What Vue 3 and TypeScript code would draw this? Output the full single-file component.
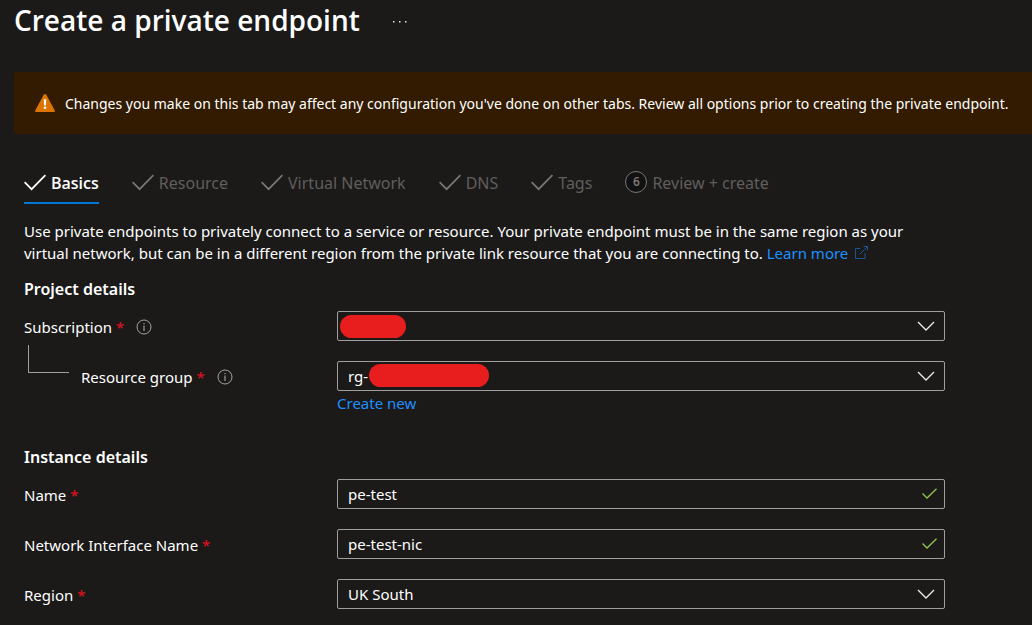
<script setup lang="ts">
import { ref } from 'vue'

interface Tab {
  label: string
  step?: number
}

const tabs: Tab[] = [
  { label: 'Basics' },
  { label: 'Resource' },
  { label: 'Virtual Network' },
  { label: 'DNS' },
  { label: 'Tags' },
  { label: 'Review + create', step: 6 },
]

const activeTab = ref('Basics')
const name = ref('pe-test')
const nicName = ref('pe-test-nic')
const region = ref('UK South')
const resourceGroup = ref('rg-')
</script>

<template>
  <main class="page">
    <header class="header">
      <h1>Create a private endpoint</h1>
      <button class="more" type="button" aria-label="More actions">
        <svg width="14" height="6" viewBox="0 0 14 6" aria-hidden="true">
          <path d="M0 4h1.500v1.500H0zM6 4h1.500v1.500H6zM12 4h1.500v1.500H12z" fill="#e8e6e3" />
        </svg>
      </button>
    </header>

    <div class="banner" role="status">
      <svg width="20" height="18" viewBox="0 0 20 18" aria-hidden="true">
        <path d="M8.700.8a1.500 1.500 0 0 1 2.600 0l8.500 15.600a1.100 1.100 0 0 1-1 1.600H1.200a1.100 1.100 0 0 1-1-1.600z" fill="#db7500" />
        <path d="M8.700 5.200h2.600l-.4 6.300H9.100z" fill="#fff" />
        <circle cx="10" cy="13.700" r="1.300" fill="#fff" />
      </svg>
      <span class="message">Changes you make on this tab may affect any configuration you've done on other tabs. Review all options prior to creating the private endpoint.</span>
    </div>

    <div class="content">
      <nav class="tabs" aria-label="Steps">
        <button
          v-for="tab in tabs"
          :key="tab.label"
          type="button"
          class="tab"
          :class="{ active: tab.label === activeTab }"
          @click="activeTab = tab.label"
        >
          <span v-if="tab.step" class="step">{{ tab.step }}</span>
          <svg v-else class="tick" width="22" height="17" viewBox="0 0 22 17" aria-hidden="true">
            <path d="M.6 8.200l7 7L21.400 1.200" fill="none" stroke="currentColor" stroke-width="1.700" />
          </svg>
          <span class="tab-label">{{ tab.label }}</span>
        </button>
      </nav>

      <p class="intro">
        Use private endpoints to privately connect to a service or resource. Your private endpoint must be in the same region as your virtual network, but can be in a different region from the private link resource that you are connecting to.
        <a href="#">Learn more<svg class="external" width="13" height="13" viewBox="0 0 13 13" aria-hidden="true">
          <path d="M5.500 2.500h-5v10h9.500V7M8.500.5h4v4M12.500.5l-7.500 7.500" fill="none" stroke="#1a5598" />
        </svg></a>
      </p>

      <form @submit.prevent>
        <h2>Project details</h2>
        <div class="row">
          <div class="label">
            <label for="subscription">Subscription <b>*</b></label>
            <svg class="info" width="16" height="16" viewBox="0 0 16 16" aria-hidden="true">
              <circle cx="8" cy="8" r="7" fill="none" stroke="#a6a4a2" />
              <path d="M8 6.500v5.500M8 4v1.200" stroke="#b8b6b4" />
            </svg>
          </div>
          <div class="field">
            <select id="subscription"><option></option></select>
            <span class="redaction short"></span>
            <svg class="chevron" width="18" height="10" viewBox="0 0 18 10" aria-hidden="true">
              <path d="M1 1l8 8 8-8" fill="none" stroke="#f0eeec" stroke-width="1.300" />
            </svg>
          </div>
        </div>

        <div class="row">
          <div class="label">
            <span class="branch"></span>
            <label for="group">Resource group <b>*</b></label>
            <svg class="info" width="16" height="16" viewBox="0 0 16 16" aria-hidden="true">
              <circle cx="8" cy="8" r="7" fill="none" stroke="#a6a4a2" />
              <path d="M8 6.500v5.500M8 4v1.200" stroke="#b8b6b4" />
            </svg>
          </div>
          <div class="field">
            <select id="group" v-model="resourceGroup"><option>rg-</option></select>
            <span class="redaction long"></span>
            <svg class="chevron" width="18" height="10" viewBox="0 0 18 10" aria-hidden="true">
              <path d="M1 1l8 8 8-8" fill="none" stroke="#f0eeec" stroke-width="1.300" />
            </svg>
          </div>
        </div>
        <div class="create"><a href="#">Create new</a></div>

        <h2>Instance details</h2>
        <div class="row">
          <div class="label"><label for="name">Name <b>*</b></label></div>
          <div class="field">
            <input id="name" v-model="name" type="text" />
            <svg class="valid" width="15" height="11" viewBox="0 0 15 11" aria-hidden="true">
              <path d="M.5 5.500l4.500 4.500L14.500.7" fill="none" stroke="#92c353" stroke-width="1.300" />
            </svg>
          </div>
        </div>
        <div class="row">
          <div class="label"><label for="nic">Network Interface Name <b>*</b></label></div>
          <div class="field">
            <input id="nic" v-model="nicName" type="text" />
            <svg class="valid" width="15" height="11" viewBox="0 0 15 11" aria-hidden="true">
              <path d="M.5 5.500l4.500 4.500L14.500.7" fill="none" stroke="#92c353" stroke-width="1.300" />
            </svg>
          </div>
        </div>
        <div class="row">
          <div class="label"><label for="region">Region <b>*</b></label></div>
          <div class="field">
            <select id="region" v-model="region"><option>UK South</option></select>
            <svg class="chevron" width="18" height="10" viewBox="0 0 18 10" aria-hidden="true">
              <path d="M1 1l8 8 8-8" fill="none" stroke="#f0eeec" stroke-width="1.300" />
            </svg>
          </div>
        </div>
      </form>
    </div>
  </main>
</template>

<style>
body {
  background: #1b1a19;
}
</style>

<style scoped>
.page {
  box-sizing: border-box;
  color: #fff;
  font: 15px/22px "Noto Sans", sans-serif;
}

.page * {
  box-sizing: border-box;
}

button {
  padding: 0;
  border: 0;
  background: none;
  font: inherit;
  color: inherit;
}

a {
  color: #1e90ff;
  text-decoration: none;
}

.header {
  display: flex;
  align-items: center;
  gap: 33px;
  height: 40px;
  padding-left: 14px;
}

h1 {
  margin: 0;
  font-family: "Open Sans", sans-serif;
  font-size: 28px;
  font-weight: 600;
  line-height: 40px;
}

.more {
  display: flex;
}

.banner {
  display: flex;
  align-items: center;
  gap: 10px;
  min-height: 62px;
  margin: 32px 0 0 14px;
  padding: 0 14px 0 21px;
  border-radius: 2px 0 0 2px;
  background: #321b00;
  font-size: 14px;
  white-space: nowrap;
}

.message,
.tab-label {
  padding-top: 2px;
}

.content {
  padding: 32px 87px 16px 24px;
}

.tabs {
  display: flex;
  gap: 33px;
}

.tab {
  display: flex;
  align-items: center;
  gap: 5px;
  height: 38px;
  padding-bottom: 4px;
  border-bottom: 2px solid transparent;
  color: #605e5c;
  font-size: 16px;
  white-space: nowrap;
}

.tab.active {
  border-color: #0078d4;
  color: #fff;
  font-family: "Open Sans", sans-serif;
  font-weight: 600;
}

.step {
  width: 22px;
  height: 22px;
  border: 1px solid #797775;
  border-radius: 50%;
  color: #797775;
  background: #111;
  font-size: 12px;
  font-weight: 600;
  line-height: 20px;
  text-align: center;
}

.tick {
  color: #797775;
}

.active .tick {
  color: #fff;
}

.intro {
  margin: 16px 0 0;
}

.external {
  margin-left: 7px;
}

h2 {
  margin: 14px 0 11px;
  font-size: 16px;
  font-weight: 600;
  line-height: 22px;
}

.row {
  display: grid;
  grid-template-columns: 313px 1fr;
  align-items: center;
}

.row + .row {
  margin-top: 20px;
}

.label {
  display: flex;
  align-items: center;
  gap: 12px;
  padding-top: 2px;
}

.label b {
  color: #e81123;
  font-weight: 400;
}

.branch {
  width: 41px;
  height: 28px;
  margin: -36px 0 0 4px;
  border: solid #a19f9d;
  border-width: 0 0 1px 1px;
}

.field {
  position: relative;
}

select,
input {
  display: block;
  width: 100%;
  height: 30px;
  padding: 0 40px 0 10px;
  border: 1px solid #a19f9d;
  border-radius: 2px;
  appearance: none;
  background: #1b1a19;
  color: #fff;
  font: inherit;
}

.chevron,
.valid {
  position: absolute;
  top: 10px;
  right: 10px;
  pointer-events: none;
}

.valid {
  top: 9px;
  right: 8px;
}

.redaction {
  position: absolute;
  top: 4px;
  left: 3px;
  width: 66px;
  height: 23px;
  border-radius: 12px;
  background: #e81e1e;
}

.redaction.long {
  top: 3px;
  left: 32px;
  width: 120px;
}

.create {
  margin: 1px 0 32px 313px;
}
</style>
